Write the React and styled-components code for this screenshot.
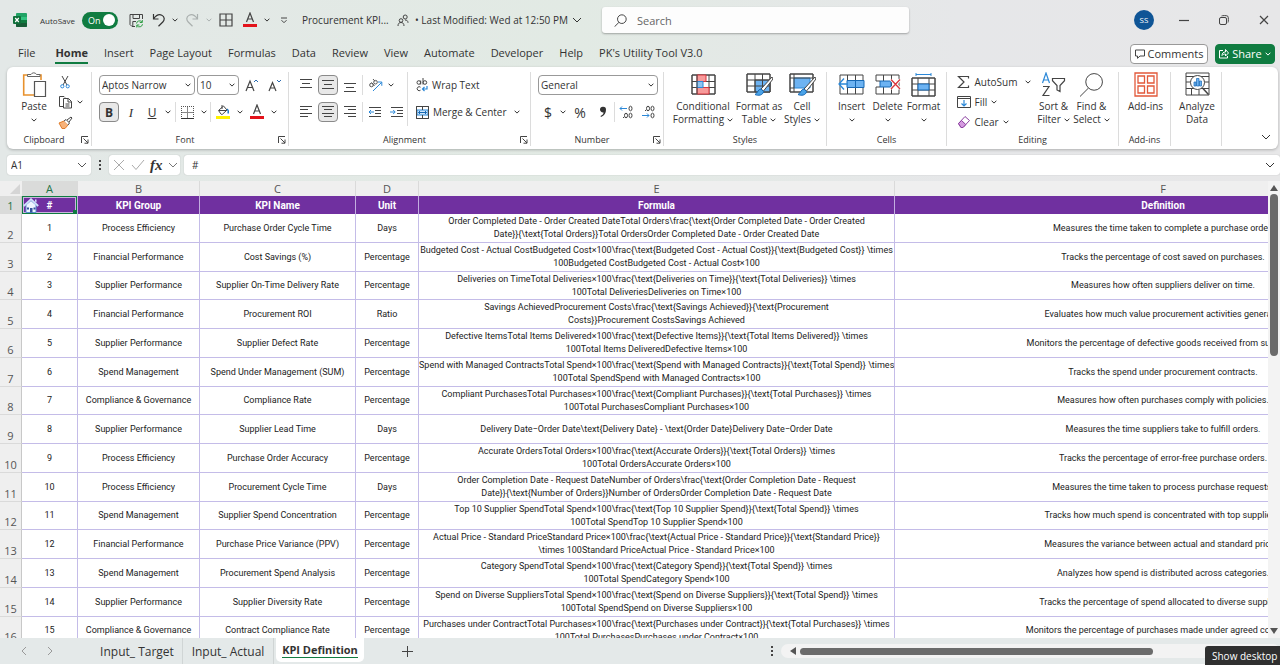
import { useState } from "react";
import styled, { createGlobalStyle, css } from "styled-components";

const GREEN = "#107c41";

const kpiRows = [
  {
    group: "Process Efficiency",
    name: "Purchase Order Cycle Time",
    unit: "Days",
    formula: [
      "Order Completed Date - Order Created DateTotal Orders\\frac{\\text{Order Completed Date - Order Created",
      "Date}}{\\text{Total Orders}}Total OrdersOrder Completed Date - Order Created Date",
    ],
    definition: "Measures the time taken to complete a purchase order.",
  },
  {
    group: "Financial Performance",
    name: "Cost Savings (%)",
    unit: "Percentage",
    formula: [
      "Budgeted Cost - Actual CostBudgeted Cost×100\\frac{\\text{Budgeted Cost - Actual Cost}}{\\text{Budgeted Cost}} \\times",
      "100Budgeted CostBudgeted Cost - Actual Cost×100",
    ],
    definition: "Tracks the percentage of cost saved on purchases.",
  },
  {
    group: "Supplier Performance",
    name: "Supplier On-Time Delivery Rate",
    unit: "Percentage",
    formula: [
      "Deliveries on TimeTotal Deliveries×100\\frac{\\text{Deliveries on Time}}{\\text{Total Deliveries}} \\times",
      "100Total DeliveriesDeliveries on Time×100",
    ],
    definition: "Measures how often suppliers deliver on time.",
  },
  {
    group: "Financial Performance",
    name: "Procurement ROI",
    unit: "Ratio",
    formula: [
      "Savings AchievedProcurement Costs\\frac{\\text{Savings Achieved}}{\\text{Procurement",
      "Costs}}Procurement CostsSavings Achieved",
    ],
    definition: "Evaluates how much value procurement activities generate.",
  },
  {
    group: "Supplier Performance",
    name: "Supplier Defect Rate",
    unit: "Percentage",
    formula: [
      "Defective ItemsTotal Items Delivered×100\\frac{\\text{Defective Items}}{\\text{Total Items Delivered}} \\times",
      "100Total Items DeliveredDefective Items×100",
    ],
    definition: "Monitors the percentage of defective goods received from suppliers.",
  },
  {
    group: "Spend Management",
    name: "Spend Under Management (SUM)",
    unit: "Percentage",
    formula: [
      "Spend with Managed ContractsTotal Spend×100\\frac{\\text{Spend with Managed Contracts}}{\\text{Total Spend}} \\times",
      "100Total SpendSpend with Managed Contracts×100",
    ],
    definition: "Tracks the spend under procurement contracts.",
  },
  {
    group: "Compliance & Governance",
    name: "Compliance Rate",
    unit: "Percentage",
    formula: [
      "Compliant PurchasesTotal Purchases×100\\frac{\\text{Compliant Purchases}}{\\text{Total Purchases}} \\times",
      "100Total PurchasesCompliant Purchases×100",
    ],
    definition: "Measures how often purchases comply with policies.",
  },
  {
    group: "Supplier Performance",
    name: "Supplier Lead Time",
    unit: "Days",
    formula: [
      "Delivery Date−Order Date\\text{Delivery Date} - \\text{Order Date}Delivery Date−Order Date",
    ],
    definition: "Measures the time suppliers take to fulfill orders.",
  },
  {
    group: "Process Efficiency",
    name: "Purchase Order Accuracy",
    unit: "Percentage",
    formula: [
      "Accurate OrdersTotal Orders×100\\frac{\\text{Accurate Orders}}{\\text{Total Orders}} \\times",
      "100Total OrdersAccurate Orders×100",
    ],
    definition: "Tracks the percentage of error-free purchase orders.",
  },
  {
    group: "Process Efficiency",
    name: "Procurement Cycle Time",
    unit: "Days",
    formula: [
      "Order Completion Date - Request DateNumber of Orders\\frac{\\text{Order Completion Date - Request",
      "Date}}{\\text{Number of Orders}}Number of OrdersOrder Completion Date - Request Date",
    ],
    definition: "Measures the time taken to process purchase requests.",
  },
  {
    group: "Spend Management",
    name: "Supplier Spend Concentration",
    unit: "Percentage",
    formula: [
      "Top 10 Supplier SpendTotal Spend×100\\frac{\\text{Top 10 Supplier Spend}}{\\text{Total Spend}} \\times",
      "100Total SpendTop 10 Supplier Spend×100",
    ],
    definition: "Tracks how much spend is concentrated with top suppliers.",
  },
  {
    group: "Financial Performance",
    name: "Purchase Price Variance (PPV)",
    unit: "Percentage",
    formula: [
      "Actual Price - Standard PriceStandard Price×100\\frac{\\text{Actual Price - Standard Price}}{\\text{Standard Price}}",
      "\\times 100Standard PriceActual Price - Standard Price×100",
    ],
    definition: "Measures the variance between actual and standard prices.",
  },
  {
    group: "Spend Management",
    name: "Procurement Spend Analysis",
    unit: "Percentage",
    formula: [
      "Category SpendTotal Spend×100\\frac{\\text{Category Spend}}{\\text{Total Spend}} \\times",
      "100Total SpendCategory Spend×100",
    ],
    definition: "Analyzes how spend is distributed across categories.",
  },
  {
    group: "Supplier Performance",
    name: "Supplier Diversity Rate",
    unit: "Percentage",
    formula: [
      "Spend on Diverse SuppliersTotal Spend×100\\frac{\\text{Spend on Diverse Suppliers}}{\\text{Total Spend}} \\times",
      "100Total SpendSpend on Diverse Suppliers×100",
    ],
    definition: "Tracks the percentage of spend allocated to diverse suppliers.",
  },
  {
    group: "Compliance & Governance",
    name: "Contract Compliance Rate",
    unit: "Percentage",
    formula: [
      "Purchases under ContractTotal Purchases×100\\frac{\\text{Purchases under Contract}}{\\text{Total Purchases}} \\times",
      "100Total PurchasesPurchases under Contract×100",
    ],
    definition: "Monitors the percentage of purchases made under agreed contracts.",
  },
];

const columns = [
  { letter: "A", title: "#", width: 56 },
  { letter: "B", title: "KPI Group", width: 122 },
  { letter: "C", title: "KPI Name", width: 156 },
  { letter: "D", title: "Unit", width: 63 },
  { letter: "E", title: "Formula", width: 476 },
  { letter: "F", title: "Definition", width: 537 },
];

const menuTabs = [
  "File",
  "Home",
  "Insert",
  "Page Layout",
  "Formulas",
  "Data",
  "Review",
  "View",
  "Automate",
  "Developer",
  "Help",
  "PK's Utility Tool V3.0",
];

/* ---------- icons ---------- */

function Svg({ w = 16, h = 16, children, ...rest }) {
  return (
    <svg
      width={w}
      height={h}
      viewBox={`0 0 ${w} ${h}`}
      fill="none"
      stroke="#444"
      strokeWidth="1"
      aria-hidden="true"
      {...rest}
    >
      {children}
    </svg>
  );
}

const Chevron = ({ big, color = "#333" }) =>
  big ? (
    <Svg w={10} h={6} stroke={color}>
      <path d="M1 1l4 4 4-4" />
    </Svg>
  ) : (
    <Svg w={6} h={4} stroke={color}>
      <path d="M.6.7L3 3.100 5.400.7" />
    </Svg>
  );

const ExcelLogo = () => (
  <Svg w={14} h={14} stroke="none">
    <rect x="3" y="0" width="11" height="14" rx="1" fill="#21a366" />
    <path d="M3 7h11v6a1 1 0 0 1-1 1H4a1 1 0 0 1-1-1z" fill="#185c37" />
    <path d="M8 4h6v3H8z" fill="#33c481" />
    <path d="M8 7h6v3H8z" fill="#107c41" />
    <rect x="0" y="3" width="8" height="8" rx="1" fill="#0f703b" />
    <path d="M2.200 5l3.600 4M5.800 5L2.200 9" stroke="#fff" strokeWidth="1.200" />
  </Svg>
);

const SaveIcon = () => (
  <Svg w={15} h={15}>
    <path d="M6 13.500H3L1 11.500v-10h12.500V6M4 1.500v4h6.500v-4M3.800 13V8.500H7" />
    <path
      d="M7.500 10.500a3 3 0 0 1 5.500-1.300M13.300 7v2.500h-2.500M13.500 11.200a3 3 0 0 1-5.500 1.300M7.800 14.500V12h2.500"
      stroke="#2f9e44"
    />
  </Svg>
);

const UndoIcon = ({ color = "#333", flip }) => (
  <Svg w={14} h={14} stroke={color} strokeWidth="1.200">
    <g transform={flip ? "translate(14 0) scale(-1 1)" : undefined}>
      <path d="M1.500 1v5h5M1.700 5.700C4 2.500 7 1 9.800 2.200c3 1.300 3 4.800 1 6.800L6.500 13.200" />
    </g>
  </Svg>
);

const GridIcon = () => (
  <Svg w={14} h={14} strokeWidth="1.200">
    <path d="M1 1h12v12H1zM7 1v12M1 7h12" />
  </Svg>
);

const FontColorIcon = () => (
  <Svg w={14} h={16}>
    <path d="M3.500 10L7 1l3.500 9M4.700 7h4.600" strokeWidth="1.200" />
    <path d="M0 13.500h14" stroke="#e3131b" strokeWidth="3" />
  </Svg>
);

const FillColorIcon = () => (
  <Svg w={14} h={16}>
    <path d="M2.500 6.500l5-4.500 3.500 4-4.500 4.200a1 1 0 0 1-1.400 0zM6 1v4M3 6.500h7" />
    <path d="M11 5c1.500 1 1.500 3 1 4.500" stroke="#1f77c4" strokeWidth="1.400" />
    <path d="M0 13.500h14" stroke="#fff200" strokeWidth="3" />
  </Svg>
);

const CustomizeIcon = () => (
  <Svg w={8} h={7}>
    <path d="M1 1h6M1.500 3.200L4 5.700l2.500-2.500" />
  </Svg>
);

const PeopleIcon = () => (
  <Svg w={12} h={13}>
    <circle cx="4" cy="6.500" r="1.800" />
    <path d="M1 12c0-2.500 1.200-3.500 3-3.500S7 9.500 7 12" />
    <circle cx="8.200" cy="3" r="2" />
    <path d="M8 6c1.800 0 3 .8 3 2.800" />
  </Svg>
);

const SearchIcon = ({ size = 13 }) => (
  <Svg w={size} h={size} viewBox="0 0 24 24" strokeWidth={24 / size}>
    <circle cx="14.500" cy="9.500" r="8" />
    <path d="M9 15.500L1 23.500" />
  </Svg>
);

const PasteIcon = () => (
  <Svg w={25} h={27}>
    <path d="M8 4H1.700v20H12M16 4h3v5" stroke="#e8912d" strokeWidth="1.600" />
    <path d="M5.500 5.500v-2H9a3 2.800 0 0 1 5.500 0H18v2z" fill="#fff" stroke="#666" />
    <path d="M12.500 10.500h11v15h-11z" fill="#fff" stroke="#555" strokeWidth="1.200" />
  </Svg>
);

const CutIcon = () => (
  <Svg w={10} h={14}>
    <path d="M2 1l5 9M8 1L3 10" />
    <circle cx="2.300" cy="11.300" r="1.600" stroke="#2b88d8" />
    <circle cx="7.700" cy="11.300" r="1.600" stroke="#2b88d8" />
  </Svg>
);

const CopyIcon = () => (
  <Svg w={15} h={14}>
    <path d="M5 11.500H1.500V1.500H6l1 1" />
    <path d="M5.500 3.500h5l3 3v6.500h-8zM10 3.500v3.500h3.500M7.500 9h4M7.500 11h4" />
  </Svg>
);

const PainterIcon = () => (
  <Svg w={15} h={13}>
    <path d="M1 7l5-2 4 4-3 3.500H4z" fill="#f7b27a" stroke="#e07b28" />
    <path d="M6 5l2-1.500 3.500 3.500L10 9M9 4l4-3 1 1-3 4" fill="#fff" />
  </Svg>
);

const FontSizeIcon = ({ up }) => (
  <Svg w={14} h={15}>
    <path
      d={up ? "M1 13L5 3l4 10M2.500 9.500h5" : "M1 13L4.500 4.500 8 13M2.300 10h4.400"}
      strokeWidth="1.200"
    />
    <path d={up ? "M9 4l2-2 2 2" : "M9 2l2 2 2-2"} stroke="#2b6cb0" />
  </Svg>
);

const BordersIcon = () => (
  <Svg w={13} h={13} stroke="#555">
    <path d="M0 .5h13M.5 2v9M12.500 2v9" strokeDasharray="1 1" />
    <path d="M6.500 1v11M1 6.500h11" stroke="#888" />
    <path d="M0 12.500h13" stroke="#333" />
  </Svg>
);

function LinesIcon({ lines }) {
  return (
    <Svg w={14} h={14}>
      {lines.map(([x1, x2, y]) => (
        <path key={y} d={`M${x1} ${y}.5H${x2}`} />
      ))}
    </Svg>
  );
}

const OrientationIcon = () => (
  <Svg w={15} h={14}>
    <g stroke="#555">
      <circle cx="3.500" cy="7" r="1.800" />
      <path d="M3.500 4.500l3 3.500" />
      <circle cx="7.500" cy="4.200" r="1.800" />
      <path d="M5 1l2 2.300" />
    </g>
    <path d="M5 13l8.500-8.500M10 4h3.800v3.800" stroke="#2b88d8" />
  </Svg>
);

const IndentIcon = ({ right }) => (
  <Svg w={14} h={12}>
    <path d="M1 1.500h12M7 4.500h6M7 7.500h6M1 10.500h12" />
    <path
      d={right ? "M0 6h5M3.200 4l2 2-2 2" : "M6 6H1M3 4L1 6l2 2"}
      stroke="#2b88d8"
    />
  </Svg>
);

const WrapIcon = () => (
  <Svg w={12} h={14}>
    <circle cx="2.800" cy="4.500" r="1.800" />
    <path d="M4.700 2.500v4M7 0v6.500" />
    <circle cx="8.900" cy="4.500" r="1.800" />
    <path d="M4.500 9.200a2 2 0 1 0 0 3" />
    <path d="M11 8v3H6.500M8.500 9l-2 2 2 2" stroke="#2b88d8" strokeWidth="1.200" />
  </Svg>
);

const MergeIcon = () => (
  <Svg w={13} h={13}>
    <path d="M.5.5h12v12H.5z" fill="#fff" />
    <path d="M1 4h11v5H1z" fill="#cfe6fa" stroke="#2b88d8" />
    <path d="M.5.5h12v12H.5zM6.500.5V4M6.500 9v3.500" />
    <path d="M2.500 6.500h8M4 5L2.500 6.500 4 8M9 5l1.500 1.500L9 8" stroke="#1769b5" />
  </Svg>
);

const DecimalIcon = ({ less }) => (
  <Svg w={14} h={14}>
    <ellipse cx={less ? 7 : 11.500} cy="3.500" rx="1.500" ry="2.300" />
    {less && <ellipse cx="11.500" cy="3.500" rx="1.500" ry="2.300" />}
    <ellipse cx="11.500" cy="10.500" rx="1.500" ry="2.300" />
    {!less && <ellipse cx="7" cy="10.500" rx="1.500" ry="2.300" />}
    <path d={less ? "M4 5.500h1" : "M4 12.500h1"} />
    <path
      d={less ? "M1 10.500h7M6 8.500l2 2-2 2" : "M8 3.500H1M3 1.500l-2 2 2 2"}
      stroke="#2b88d8"
    />
  </Svg>
);

const LauncherIcon = () => (
  <Svg w={8} h={8}>
    <path d="M.5 7V.5H7M2.500 2.500L7 7M7 3.500V7.200H3.500" />
  </Svg>
);

const ConditionalIcon = () => (
  <Svg w={25} h={21}>
    <path d="M1 1h23v19H1z" fill="#fff" />
    <path d="M1 1h23v19H1zM1 7.500h23M1 13.500h23M18 1v19" />
    <path d="M6 1h9v6.500H6zM6 13.500h12V20H6z" fill="#f79a9a" stroke="#d9363e" />
    <path d="M6 7.500h6v6H6z" fill="#8fc3f0" stroke="#2b88d8" />
    <path d="M6 1v19" />
  </Svg>
);

const Brush = () => (
  <>
    <path d="M26 4L15 16l2.500 2L27 6z" fill="#fff" />
    <path d="M15 16c-3 0-3 4-6 5.500 3 1.500 8 1 8.500-3z" fill="#4aa3e8" stroke="#1769b5" />
  </>
);

const FormatTableIcon = () => (
  <Svg w={27} h={24}>
    <path d="M1 1h23v18H1z" fill="#fff" />
    <path d="M9 7h15v12H9z" fill="#6db3f2" />
    <path d="M1 1h23v18H1zM1 7h23M1 13h23M9 1v18M16.500 1v18" />
    <Brush />
  </Svg>
);

const CellStylesIcon = () => (
  <Svg w={27} h={24}>
    <path d="M1 1h23v18H1z" fill="#fff" />
    <path d="M5 5h16v10H5z" fill="#6db3f2" stroke="#2b88d8" />
    <path d="M1 1h23v18H1zM1 5h23M5 1v18M1 15h4" />
    <Brush />
  </Svg>
);

const InsertIcon = () => (
  <Svg w={27} h={21}>
    <path d="M2 1h23v19H2zM9.500 1v19M17.500 1v19" fill="#fff" />
    <path d="M9 6.500h17v7H9z" fill="#6db3f2" stroke="#1769b5" />
    <path d="M17.500 6.500v7" stroke="#1769b5" />
    <path d="M6 4.500L1 10l5 5.500M1 10h9" stroke="#2b88d8" strokeWidth="1.300" />
  </Svg>
);

const DeleteIcon = () => (
  <Svg w={26} h={21}>
    <path d="M1 1h23v19H1zM8.500 1v19M16.500 1v19" fill="#fff" />
    <path d="M0 7h5v6H0z" fill="#fff" stroke="none" />
    <path d="M5 7h11v6H5z" fill="#6db3f2" stroke="#1769b5" />
    <path d="M1 7h4M1 13h4" />
    <path d="M16 5.500l9 9.500M25 5.500L16 15" stroke="#fff" strokeWidth="3" />
    <path d="M16 5.500l9 9.500M25 5.500L16 15" stroke="#d9363e" strokeWidth="1.300" />
  </Svg>
);

const FormatIcon = () => (
  <Svg w={25} h={24}>
    <path d="M5 1.500h15M5 0v3M20 0v3" stroke="#2b88d8" />
    <path d="M1 5h23v18H1z" fill="#fff" />
    <path d="M1 5h23v18H1zM1 11h23M1 17h23M7 5v18M18 5v18" />
    <path d="M7 11h11v6H7z" fill="#6db3f2" stroke="#1769b5" />
  </Svg>
);

const SumIcon = () => (
  <Svg w={14} h={14}>
    <path d="M11.500 3.500v-2H1.500L7 7l-5.500 5.500h10v-2" strokeWidth="1.200" />
  </Svg>
);

const FillIcon = () => (
  <Svg w={14} h={14}>
    <path d="M.5 1.500h13v11H.5zM.5 3.500h13" />
    <path d="M7 5v6M4.500 8.500L7 11l2.500-2.500" stroke="#2b88d8" strokeWidth="1.200" />
  </Svg>
);

const EraserIcon = () => (
  <Svg w={14} h={14} stroke="#8b3fa0">
    <path d="M1.500 8.500L8 1.500l4.500 4-6.500 7H4z" fill="#fff" />
    <path d="M1.500 8.500L4.500 5.500l4.300 4-2.800 3H4z" fill="#d59be0" />
  </Svg>
);

const SortIcon = () => (
  <Svg w={25} h={25}>
    <path d="M1.500 11L5 1l3.500 10M2.700 8h4.600" stroke="#2b88d8" strokeWidth="1.200" />
    <path d="M2 14.500h6L2 23.500h6.500" strokeWidth="1.200" />
    <path d="M11.500 6.500h12v2.200L19 13.500v6l-3-1.500v-4.500l-4.500-4.800z" strokeWidth="1.200" />
  </Svg>
);

const AddinsIcon = () => (
  <Svg w={24} h={25} stroke="#e2583a" strokeWidth="1.300">
    <path d="M1 1h22v23H1zM4 4h6.500v7H4zM13.500 4H20v7h-6.500zM4 14h6.500v7H4zM13.500 14H20v7h-6.500z" />
  </Svg>
);

const AnalyzeIcon = () => (
  <Svg w={25} h={25}>
    <path d="M1 1h23v22H1zM1 4.500h23M1 10h5M18 10h6M1 16.500h23M6.500 16v7M14 18v5" />
    <circle cx="12.500" cy="10.500" r="7" fill="#fff" />
    <path d="M17.500 16l6 6.500" strokeWidth="1.500" />
    <path d="M9 10h2v4H9zM11.500 6.500h2.500V14h-2.500zM14.500 9h2v5h-2z" fill="#6db3f2" stroke="#1769b5" strokeWidth=".7" />
  </Svg>
);

const HomeIcon = () => (
  <Svg w={16} h={15} stroke="#5b8fd0">
    <path d="M3 7v7.500h10V7L8 2.500z" fill="#eef5ff" />
    <path d="M.8 8L8 1.200 15.200 8" stroke="#cfe2fb" strokeWidth="1.800" />
    <path d="M7 10h2.500v4.500H7zM4 9.500h2v2H4zM10.500 9.500h2v2h-2z" fill="#35539c" stroke="none" />
    <path d="M12 1.500h1.500v3L12 3.500z" fill="#cfe2fb" stroke="none" />
  </Svg>
);

/* ---------- parts ---------- */

function Launcher({ name }) {
  return (
    <LaunchButton aria-label={`${name} settings`}>
      <LauncherIcon />
    </LaunchButton>
  );
}

function RibbonGroup({ label, width, launcher, children }) {
  return (
    <Group $width={width}>
      <GroupBody>{children}</GroupBody>
      <GroupFooter>
        <span>{label}</span>
        {launcher && <Launcher name={label} />}
      </GroupFooter>
    </Group>
  );
}

function BigTool({ icon, lines, width, menu }) {
  // one-line tools show their arrow under the label
  return (
    <BigButton $width={width}>
      <BigIcon>{icon}</BigIcon>
      <span>{lines[0]}</span>
      <LastLine>
        {lines[1]}
        {menu && <Chevron />}
      </LastLine>
    </BigButton>
  );
}

function Tool({ label, width = 20, pressed, children }) {
  return (
    <ToolButton aria-label={label} $width={width} $pressed={pressed}>
      {children}
    </ToolButton>
  );
}

const Drop = ({ label, width = 14, color }) => (
  <Tool label={`${label} options`} width={width}>
    <Chevron color={color} />
  </Tool>
);

function RibbonSelect({ label, width, value }) {
  return (
    <SelectBox $width={width}>
      <select aria-label={label} defaultValue={value}>
        <option>{value}</option>
      </select>
      <Chevron />
    </SelectBox>
  );
}

function TitleBar() {
  const [autoSave, setAutoSave] = useState(true);

  return (
    <TitleRow>
      <QuickAccess>
        <ExcelLogo />
        <AutoSaveLabel>
          AutoSave
          <input
            type="checkbox"
            checked={autoSave}
            onChange={(e) => setAutoSave(e.target.checked)}
          />
          <Switch $on={autoSave}>{autoSave ? "On" : "Off"}</Switch>
        </AutoSaveLabel>
        <ToolRow>
          <Tool label="Save" width={24}>
            <SaveIcon />
          </Tool>
          <Tool label="Undo" width={22}>
            <UndoIcon />
          </Tool>
          <Drop label="Undo" width={10} />
          <Tool label="Redo" width={24}>
            <UndoIcon color="#aab0af" flip />
          </Tool>
          <Drop label="Redo" width={10} color="#aab0af" />
          <Tool label="Borders" width={24}>
            <GridIcon />
          </Tool>
          <Tool label="Font color" width={24}>
            <FontColorIcon />
          </Tool>
          <Drop label="Font color" width={10} />
          <Tool label="Customize toolbar" width={24}>
            <CustomizeIcon />
          </Tool>
        </ToolRow>
      </QuickAccess>
      <FileInfo>
        <span>Procurement KPI...</span>
        <PeopleIcon />
        <ModifiedButton>
          • Last Modified: Wed at 12:50 PM
          <Chevron big />
        </ModifiedButton>
      </FileInfo>
      <SearchBox>
        <SearchIcon />
        <input aria-label="Search" placeholder="Search" />
      </SearchBox>
      <WindowControls>
        <Avatar>SS</Avatar>
        <WindowButton aria-label="Minimize">
          <Svg w={10} h={10}>
            <path d="M0 5.500h10" strokeWidth="1.200" />
          </Svg>
        </WindowButton>
        <WindowButton aria-label="Restore">
          <Svg w={10} h={10}>
            <rect x=".5" y="2.500" width="7" height="7" rx="1.500" />
            <path d="M2.500 1C3 .5 8 .3 8.800 1.200S9.500 7 9 7.500" />
          </Svg>
        </WindowButton>
        <WindowButton aria-label="Close">
          <Svg w={10} h={10}>
            <path d="M1 1l8 8M9 1L1 9" strokeWidth="1.200" />
          </Svg>
        </WindowButton>
      </WindowControls>
    </TitleRow>
  );
}

function Menu() {
  return (
    <MenuRow>
      {menuTabs.map((tab) => (
        <MenuTab key={tab} href="#ribbon" $active={tab === "Home"}>
          {tab}
        </MenuTab>
      ))}
      <MenuActions>
        <CommentsButton>
          <Svg w={10} h={10}>
            <path d="M.5 1h9v6H5L2.500 9.300V7h-2z" />
          </Svg>
          Comments
        </CommentsButton>
        <ShareButton>
          <Svg w={10} h={11} stroke="#fff">
            <path d="M4 2.500H.5v7.500h8V8M3 7.500C3 5 4.500 4 6.500 4V1.500L9.500 5l-3 3V6C5 6 4 6.300 3 7.500z" />
          </Svg>
          Share
          <Chevron color="#fff" />
        </ShareButton>
      </MenuActions>
    </MenuRow>
  );
}

function Ribbon() {
  return (
    <RibbonPanel id="ribbon">
      <RibbonGroup label="Clipboard" width={85} launcher>
        <ClipboardTools>
          <BigTool icon={<PasteIcon />} lines={["Paste"]} width={38} menu />
          <SmallStack>
            <Tool label="Cut">
              <CutIcon />
            </Tool>
            <ToolRow>
              <Tool label="Copy">
                <CopyIcon />
              </Tool>
              <Drop label="Copy" width={10} />
            </ToolRow>
            <Tool label="Format painter">
              <PainterIcon />
            </Tool>
          </SmallStack>
        </ClipboardTools>
      </RibbonGroup>

      <RibbonGroup label="Font" width={197} launcher>
        <ToolStack>
          <ToolRow $gap={2}>
            <RibbonSelect label="Font" width={96} value="Aptos Narrow" />
            <RibbonSelect label="Font size" width={42} value="10" />
            <Tool label="Increase font size" width={22}>
              <FontSizeIcon up />
            </Tool>
            <Tool label="Decrease font size">
              <FontSizeIcon />
            </Tool>
          </ToolRow>
          <ToolRow>
            <Tool label="Bold" pressed>
              <b>B</b>
            </Tool>
            <Tool label="Italic" width={24}>
              <SerifItalic>I</SerifItalic>
            </Tool>
            <Tool label="Underline" width={18}>
              <u>U</u>
            </Tool>
            <Drop label="Underline" />
            <Separator />
            <Tool label="Borders" width={22}>
              <BordersIcon />
            </Tool>
            <Drop label="Borders" width={12} />
            <Separator />
            <Tool label="Fill color" width={24}>
              <FillColorIcon />
            </Tool>
            <Drop label="Fill color" width={10} />
            <Tool label="Font color" width={24}>
              <FontColorIcon />
            </Tool>
            <Drop label="Font color" width={10} />
          </ToolRow>
        </ToolStack>
      </RibbonGroup>

      <RibbonGroup label="Alignment" width={242} launcher>
        <ToolStack>
          <ToolRow $gap={2}>
            <Tool label="Top align">
              <LinesIcon lines={[[1, 13, 1], [3, 11, 5], [1, 13, 9]]} />
            </Tool>
            <Tool label="Middle align" pressed>
              <LinesIcon lines={[[1, 13, 2], [3, 11, 6], [1, 13, 10]]} />
            </Tool>
            <Tool label="Bottom align">
              <LinesIcon lines={[[1, 13, 5], [3, 11, 9], [1, 13, 13]]} />
            </Tool>
            <Separator />
            <Tool label="Orientation">
              <OrientationIcon />
            </Tool>
            <Drop label="Orientation" width={8} />
          </ToolRow>
          <ToolRow $gap={2}>
            <Tool label="Align left">
              <LinesIcon lines={[[1, 13, 1], [1, 9, 4], [1, 13, 8], [1, 9, 11]]} />
            </Tool>
            <Tool label="Center" pressed>
              <LinesIcon lines={[[1, 13, 1], [3, 11, 4], [1, 13, 8], [3, 11, 11]]} />
            </Tool>
            <Tool label="Align right">
              <LinesIcon lines={[[1, 13, 1], [5, 13, 4], [1, 13, 8], [5, 13, 11]]} />
            </Tool>
            <Separator />
            <Tool label="Decrease indent">
              <IndentIcon />
            </Tool>
            <Tool label="Increase indent">
              <IndentIcon right />
            </Tool>
          </ToolRow>
        </ToolStack>
        <WrapTools>
          <TextTool>
            <WrapIcon />
            Wrap Text
          </TextTool>
          <TextTool $end={10}>
            <MergeIcon />
            Merge &amp; Center
            <Chevron />
          </TextTool>
        </WrapTools>
      </RibbonGroup>

      <RibbonGroup label="Number" width={133} launcher>
        <ToolStack>
          <RibbonSelect label="Number format" width={120} value="General" />
          <ToolRow>
            <Tool label="Accounting format">
              <Symbol>$</Symbol>
            </Tool>
            <Drop label="Accounting format" width={10} />
            <Tool label="Percent style" width={24}>
              <Symbol>%</Symbol>
            </Tool>
            <Tool label="Comma style" width={22}>
              <Svg w={8} h={12} stroke="none">
                <path d="M1 3.500a3 3 0 1 1 6 .3C7 7 5.500 9.500 2 11l-.5-1C3.500 9 4.500 8 4.600 6.500A3 3 0 0 1 1 3.500z" fill="#333" />
              </Svg>
            </Tool>
            <Separator />
            <Tool label="Increase decimal" width={22}>
              <DecimalIcon />
            </Tool>
            <Tool label="Decrease decimal" width={22}>
              <DecimalIcon less />
            </Tool>
          </ToolRow>
        </ToolStack>
      </RibbonGroup>

      <RibbonGroup label="Styles" width={163}>
        <BigTool icon={<ConditionalIcon />} lines={["Conditional", "Formatting"]} width={64} menu />
        <BigTool icon={<FormatTableIcon />} lines={["Format as", "Table"]} width={48} menu />
        <BigTool icon={<CellStylesIcon />} lines={["Cell", "Styles"]} width={38} menu />
      </RibbonGroup>

      <RibbonGroup label="Cells" width={120}>
        <BigTool icon={<InsertIcon />} lines={["Insert"]} width={36} menu />
        <BigTool icon={<DeleteIcon />} lines={["Delete"]} width={36} menu />
        <BigTool icon={<FormatIcon />} lines={["Format"]} width={36} menu />
      </RibbonGroup>

      <RibbonGroup label="Editing" width={172}>
        <EditStack>
          <TextTool $end={4}>
            <SumIcon />
            AutoSum
            <Chevron />
          </TextTool>
          <TextTool>
            <FillIcon />
            Fill
            <Chevron />
          </TextTool>
          <TextTool>
            <EraserIcon />
            Clear
            <Chevron />
          </TextTool>
        </EditStack>
        <BigTool icon={<SortIcon />} lines={["Sort &", "Filter"]} width={38} menu />
        <BigTool icon={<SearchIcon size={25} />} lines={["Find &", "Select"]} width={38} menu />
      </RibbonGroup>

      <RibbonGroup label="Add-ins" width={52}>
        <BigTool icon={<AddinsIcon />} lines={["Add-ins"]} width={40} />
      </RibbonGroup>

      <RibbonGroup width={51}>
        <BigTool icon={<AnalyzeIcon />} lines={["Analyze", "Data"]} width={40} />
      </RibbonGroup>

      <CollapseButton aria-label="Collapse ribbon">
        <Chevron big />
      </CollapseButton>
    </RibbonPanel>
  );
}

function FormulaBar() {
  return (
    <FormulaRow>
      <NameBox>
        <input aria-label="Name box" defaultValue="A1" />
        <Chevron big color="#555" />
      </NameBox>
      <Dots />
      <FxBox>
        <Svg w={12} h={12} stroke="#aaa">
          <path d="M1 1l10 10M11 1L1 11" />
        </Svg>
        <Svg w={14} h={12} stroke="#aaa">
          <path d="M1 6l4 4.500L13 1" />
        </Svg>
        <FxText>fx</FxText>
        <Chevron big color="#777" />
      </FxBox>
      <FormulaInput>
        <input aria-label="Formula bar" defaultValue="#" />
        <Chevron big />
      </FormulaInput>
    </FormulaRow>
  );
}

function Sheet() {
  return (
    <SheetArea>
      <SheetView>
        <Grid>
          <colgroup>
            <Col $width={22} />
            {columns.map((col) => (
              <Col key={col.letter} $width={col.width} />
            ))}
          </colgroup>
          <thead>
            <tr>
              <Corner>
                <Svg w={10} h={10} stroke="none">
                  <path d="M10 0v10H0z" fill="#d5d5d5" />
                </Svg>
              </Corner>
              {columns.map((col) => (
                <Letter key={col.letter} scope="col" $active={col.letter === "A"}>
                  {col.letter}
                </Letter>
              ))}
            </tr>
          </thead>
          <tbody>
            <TitleTr>
              <RowNumber scope="row" $active>
                1
              </RowNumber>
              {columns.map((col) => (
                <TitleCell key={col.letter} $selected={col.letter === "A"}>
                  {col.letter === "A" && (
                    <HomeLink href="#home" aria-label="Home">
                      <HomeIcon />
                    </HomeLink>
                  )}
                  {col.title}
                </TitleCell>
              ))}
            </TitleTr>
            {kpiRows.map((row, i) => (
              <DataTr key={row.name}>
                <RowNumber scope="row">{i + 2}</RowNumber>
                <Cell>{i + 1}</Cell>
                <Cell>{row.group}</Cell>
                <Cell>{row.name}</Cell>
                <Cell>{row.unit}</Cell>
                <FormulaCell>{row.formula.join("\n")}</FormulaCell>
                <Cell>{row.definition}</Cell>
              </DataTr>
            ))}
          </tbody>
        </Grid>
      </SheetView>
      <VerticalBar>
        <Svg w={8} h={6} stroke="none">
          <path d="M4 0l4 6H0z" fill="#555" />
        </Svg>
        <VerticalThumb />
        <Svg w={8} h={6} stroke="none">
          <path d="M4 6L0 0h8z" fill="#555" />
        </Svg>
      </VerticalBar>
    </SheetArea>
  );
}

function SheetTabs() {
  return (
    <BottomRow>
      <NavButton aria-label="Previous sheet">
        <Svg w={6} h={10} stroke="#999">
          <path d="M5 1L1 5l4 4" />
        </Svg>
      </NavButton>
      <NavButton aria-label="Next sheet">
        <Svg w={6} h={10} stroke="#999">
          <path d="M1 1l4 4-4 4" />
        </Svg>
      </NavButton>
      <TabList>
        <SheetTab>Input_ Target</SheetTab>
        <SheetTab>Input_ Actual</SheetTab>
        <SheetTab $active>
          <span>KPI Definition</span>
        </SheetTab>
      </TabList>
      <AddButton aria-label="New sheet">
        <Svg w={11} h={11}>
          <path d="M5.500 0v11M0 5.500h11" />
        </Svg>
      </AddButton>
      <Dots />
      <HorizontalBar>
        <Svg w={6} h={8} stroke="none">
          <path d="M0 4l6-4v8z" fill="#555" />
        </Svg>
        <HorizontalThumb />
      </HorizontalBar>
      <Tooltip role="tooltip">Show desktop</Tooltip>
    </BottomRow>
  );
}

function App() {
  return (
    <Page>
      <GlobalStyle />
      <TitleBar />
      <Menu />
      <Ribbon />
      <FormulaBar />
      <Sheet />
      <SheetTabs />
    </Page>
  );
}

export default App;

const GlobalStyle = createGlobalStyle`
  * {
    box-sizing: border-box;
  }
  body {
    margin: 0;
  }
  button, input, select {
    font: inherit;
    color: inherit;
    border: 0;
    padding: 0;
    background: none;
    outline: none;
  }
  svg {
    flex: none;
    display: block;
  }
`;

const Page = styled.div`
  position: relative;
  display: flex;
  flex-direction: column;
  height: 100vh;
  overflow: hidden;
  color: #333;
  background: linear-gradient(90deg, #e3e8e7 0%, #e2eae4 45%, #e6e7e9 75%, #e7e7e8 100%);
  font-family: "Open Sans", "Noto Sans", sans-serif;
  font-size: 10px;
  line-height: 13px;
`;

const TitleRow = styled.header`
  display: flex;
  align-items: center;
  height: 40px;
  flex: none;
`;

const QuickAccess = styled.div`
  display: flex;
  align-items: center;
  flex: none;
  width: 302px;
  padding-left: 13px;
`;

const AutoSaveLabel = styled.label`
  display: flex;
  align-items: center;
  justify-content: space-between;
  width: 78px;
  margin: 0 6px 0 13px;
  font-size: 8px;
  input {
    position: absolute;
    opacity: 0;
  }
`;

const Switch = styled.span`
  display: flex;
  align-items: center;
  justify-content: space-between;
  width: 36px;
  height: 17px;
  padding: 0 3px 0 6px;
  border-radius: 9px;
  color: #fff;
  font-size: 9px;
  background: ${(props) => (props.$on ? GREEN : "#888")};
  &::after {
    content: "";
    width: 12px;
    height: 12px;
    border-radius: 50%;
    background: #fff;
  }
`;

const ToolRow = styled.div`
  display: flex;
  align-items: center;
  gap: ${(props) => props.$gap || 0}px;
`;

const ToolButton = styled.button`
  display: flex;
  align-items: center;
  justify-content: center;
  flex: none;
  width: ${(props) => props.$width}px;
  height: 20px;
  font-size: 12px;
  ${(props) =>
    props.$pressed &&
    css`
      border: 1px solid #8a8a8a;
      border-radius: 4px;
      background: #e8e8e8;
    `}
`;

const FileInfo = styled.div`
  display: flex;
  align-items: center;
  flex: none;
  width: 300px;
  white-space: nowrap;
  > span {
    width: 95px;
  }
`;

const ModifiedButton = styled.button`
  display: flex;
  align-items: center;
  gap: 4px;
  margin-left: 6px;
`;

const SearchBox = styled.label`
  display: flex;
  align-items: center;
  gap: 10px;
  flex: 0 1 307px;
  height: 26px;
  padding-left: 12px;
  border-radius: 3px;
  background: #fdfdfd;
  box-shadow: 0 1px 2px rgba(0, 0, 0, 0.3);
  input {
    flex: 1;
    font-size: 11px;
  }
  input::placeholder {
    color: #666;
    opacity: 1;
  }
`;

const WindowControls = styled.div`
  display: flex;
  align-items: center;
  margin-left: auto;
`;

const Avatar = styled.span`
  width: 20px;
  height: 20px;
  margin-right: 10px;
  border-radius: 50%;
  background: #0f5596;
  color: #fff;
  font-size: 8px;
  line-height: 20px;
  text-align: center;
`;

const WindowButton = styled.button`
  display: flex;
  justify-content: center;
  width: 40px;
  &:last-child {
    width: 36px;
    padding-left: 4px;
  }
`;

const MenuRow = styled.nav`
  display: flex;
  align-items: center;
  gap: 16px;
  flex: none;
  height: 27px;
  padding: 0 5px 0 18px;
`;

const MenuTab = styled.a`
  padding: 2px 0 1px;
  margin-left: ${(props) => (props.$active ? 4 : 0)}px;
  border-bottom: 2px solid ${(props) => (props.$active ? GREEN : "transparent")};
  color: #333;
  font-size: 11px;
  line-height: 16px;
  font-weight: ${(props) => (props.$active ? 700 : 400)};
  text-decoration: none;
  white-space: nowrap;
`;

const MenuActions = styled.div`
  display: flex;
  gap: 7px;
  margin-left: auto;
`;

const CommentsButton = styled.button`
  display: flex;
  align-items: center;
  justify-content: center;
  gap: 3px;
  width: 78px;
  height: 20px;
  border: 1px solid #999;
  border-radius: 4px;
  background: #fff;
  font-size: 11px;
`;

const ShareButton = styled(CommentsButton)`
  width: 60px;
  border-color: ${GREEN};
  background: ${GREEN};
  color: #fff;
`;

const RibbonPanel = styled.section`
  display: flex;
  flex: none;
  height: 82px;
  margin: 0 2px 0 7px;
  border-radius: 6px;
  background: #fff;
  box-shadow: 0 1px 3px rgba(0, 0, 0, 0.25);
`;

const Group = styled.div`
  display: flex;
  flex-direction: column;
  flex: none;
  width: ${(props) => props.$width}px;
  margin: 5px 0 3px;
  border-right: 1px solid #dcdcdc;
`;

const GroupBody = styled.div`
  display: flex;
  justify-content: center;
  flex: 1;
  padding-left: 2px;
`;

const GroupFooter = styled.div`
  display: flex;
  align-items: center;
  height: 12px;
  font-size: 9px;
  line-height: 12px;
  text-align: center;
  white-space: nowrap;
  > span {
    flex: 1;
  }
`;

const LaunchButton = styled.button`
  width: 8px;
  height: 8px;
  margin-right: 2px;
`;

const ClipboardTools = styled.div`
  display: flex;
  gap: 2px;
`;

const SmallStack = styled.div`
  display: flex;
  flex-direction: column;
`;

const ToolStack = styled.div`
  display: flex;
  flex-direction: column;
  flex: 1;
  gap: 7px;
  padding: 3px 0 0 5px;
`;

const WrapTools = styled(ToolStack)`
  flex: none;
  width: 123px;
  height: 54px;
  padding-left: 8px;
  border-left: 1px solid #dcdcdc;
`;

const EditStack = styled.div`
  display: flex;
  flex-direction: column;
  width: 78px;
`;

const TextTool = styled.button`
  display: flex;
  align-items: center;
  gap: 4px;
  height: 20px;
  white-space: nowrap;
  ${(props) =>
    props.$end &&
    css`
      > :last-child {
        margin: 0 ${props.$end}px 0 auto;
      }
    `}
`;

const BigButton = styled.button`
  display: flex;
  flex-direction: column;
  align-items: center;
  width: ${(props) => props.$width}px;
  white-space: nowrap;
`;

const BigIcon = styled.span`
  display: flex;
  align-items: center;
  height: 25px;
  margin-bottom: 3px;
`;

const LastLine = styled.span`
  display: flex;
  align-items: center;
  gap: 3px;
  height: 13px;
`;

const SelectBox = styled.label`
  display: flex;
  align-items: center;
  flex: none;
  width: ${(props) => props.$width}px;
  height: 20px;
  padding: 0 3px 0 2px;
  border: 1px solid #999;
  border-radius: 4px;
  select {
    flex: 1;
    min-width: 0;
    appearance: none;
  }
`;

const Separator = styled.span`
  width: 1px;
  height: 20px;
  background: #dcdcdc;
`;

const SerifItalic = styled.i`
  font-family: "Liberation Serif", serif;
  font-size: 13px;
`;

const Symbol = styled.span`
  font-size: 14px;
`;

const CollapseButton = styled.button`
  align-self: flex-end;
  margin: 0 7px 9px auto;
`;

const FormulaRow = styled.div`
  display: flex;
  align-items: center;
  flex: none;
  height: 32px;
  padding-left: 7px;
`;

const WhiteBox = styled.div`
  display: flex;
  align-items: center;
  height: 20px;
  border-radius: 3px;
  background: #fff;
  box-shadow: 0 0 1px rgba(0, 0, 0, 0.3);
`;

const NameBox = styled(WhiteBox)`
  width: 84px;
  padding: 0 4px;
  input {
    flex: 1;
    min-width: 0;
  }
`;

const Dots = styled.span`
  width: 2px;
  height: 10px;
  margin: 0 8px;
  background: repeating-linear-gradient(#444 0 2px, transparent 2px 4px);
`;

const FxBox = styled(WhiteBox)`
  width: 71px;
  padding: 0 2px 0 4px;
  justify-content: space-between;
`;

const FxText = styled.i`
  font-family: "Liberation Serif", serif;
  font-size: 15px;
  font-weight: 700;
`;

const FormulaInput = styled(WhiteBox)`
  flex: 1;
  margin-left: 4px;
  padding: 0 5px 0 8px;
  input {
    flex: 1;
  }
`;

const SheetArea = styled.main`
  display: flex;
  flex: 1;
  min-height: 0;
`;

const SheetView = styled.div`
  flex: 1;
  min-width: 0;
  overflow: hidden;
  background: #fff;
`;

const Grid = styled.table`
  width: 1432px;
  table-layout: fixed;
  border-collapse: separate;
  border-spacing: 0;
  font-family: Roboto, sans-serif;
  font-size: 9px;
  th,
  td {
    padding: 0;
    overflow: hidden;
    text-align: center;
    white-space: nowrap;
  }
`;

const Col = styled.col`
  width: ${(props) => props.$width}px;
`;

const Corner = styled.td`
  background: #efefef;
  svg {
    margin-left: 10px;
  }
`;

const Letter = styled.th`
  height: 15px;
  border-right: 1px solid #dadada;
  background: ${(props) => (props.$active ? "#dadbda" : "#efefef")};
  color: ${(props) => (props.$active ? "#217346" : "#555")};
  font: 400 11px / 15px "Open Sans", sans-serif;
`;

const RowNumber = styled.th`
  border-right: 1px solid #c8c8c8;
  border-bottom: 1px solid #dadada;
  background: ${(props) => (props.$active ? "#dadbda" : "#efefef")};
  color: ${(props) => (props.$active ? "#217346" : "#555")};
  font: 400 11px / 15px "Open Sans", sans-serif;
  vertical-align: bottom;
`;

const TitleTr = styled.tr`
  height: 18px;
`;

const TitleCell = styled.td`
  position: relative;
  border-right: 1px solid #c3aee0;
  background: #7030a0;
  color: #fff;
  font-size: 10px;
  font-weight: 700;
  ${(props) =>
    props.$selected &&
    css`
      box-shadow: inset 0 0 0 1px ${GREEN}, inset 0 0 0 2px #c9b5dc;
      &::after {
        content: "";
        position: absolute;
        right: 0;
        bottom: 0;
        width: 4px;
        height: 4px;
        background: ${GREEN};
      }
    `}
`;

const HomeLink = styled.a`
  position: absolute;
  left: 1px;
  top: 2px;
`;

const DataTr = styled.tr`
  height: 29px;
  &:nth-child(4n) {
    height: 28px;
  }
`;

const Cell = styled.td`
  border-right: 1px solid #c4bce8;
  border-bottom: 1px solid #c4bce8;
  background: #fff;
  color: #222;
`;

const FormulaCell = styled(Cell)`
  && {
    white-space: pre;
  }
`;

const VerticalBar = styled.div`
  display: flex;
  flex-direction: column;
  align-items: center;
  flex: none;
  gap: 3px;
  width: 12px;
  padding: 4px 0;
  background: #f3f3f3;
  > :last-child {
    margin-top: auto;
  }
`;

const VerticalThumb = styled.div`
  width: 8px;
  height: 36%;
  border-radius: 4px;
  background: #6b6b6b;
`;

const BottomRow = styled.footer`
  display: flex;
  align-items: center;
  flex: none;
  height: 27px;
  border-bottom: 1px solid #fff;
  background: #e4e9e9;
`;

const NavButton = styled.button`
  display: flex;
  justify-content: center;
  width: 26px;
  &:first-child {
    margin-left: 11px;
  }
`;

const TabList = styled.div`
  display: flex;
  align-self: stretch;
  margin-left: 29px;
`;

const SheetTab = styled.button`
  width: 91px;
  border-right: 1px solid #d0d5d5;
  font-size: 12px;
  white-space: nowrap;
  ${(props) =>
    props.$active &&
    css`
      width: 88px;
      height: 24px;
      margin-left: 2px;
      border: 0;
      border-radius: 0 0 5px 5px;
      background: #fff;
      font-size: 11px;
      font-weight: 700;
      span {
        display: inline-block;
        padding-bottom: 1px;
        border-bottom: 1px solid ${GREEN};
      }
    `}
`;

const AddButton = styled.button`
  margin: 0 auto 0 38px;
`;

const HorizontalBar = styled.div`
  display: flex;
  align-items: center;
  gap: 4px;
  width: 39%;
  height: 14px;
  padding-left: 9px;
  border-radius: 7px;
  background: #f3f3f3;
`;

const HorizontalThumb = styled.div`
  width: 72%;
  height: 7px;
  border-radius: 4px;
  background: #6b6b6b;
`;

const Tooltip = styled.div`
  position: absolute;
  right: 0;
  bottom: 0;
  width: 75px;
  height: 19px;
  padding: 4px 0 0 7px;
  border-radius: 3px 0 0 0;
  background: #2f2f2f;
  color: #fff;
  font-size: 10px;
  white-space: nowrap;
`;
